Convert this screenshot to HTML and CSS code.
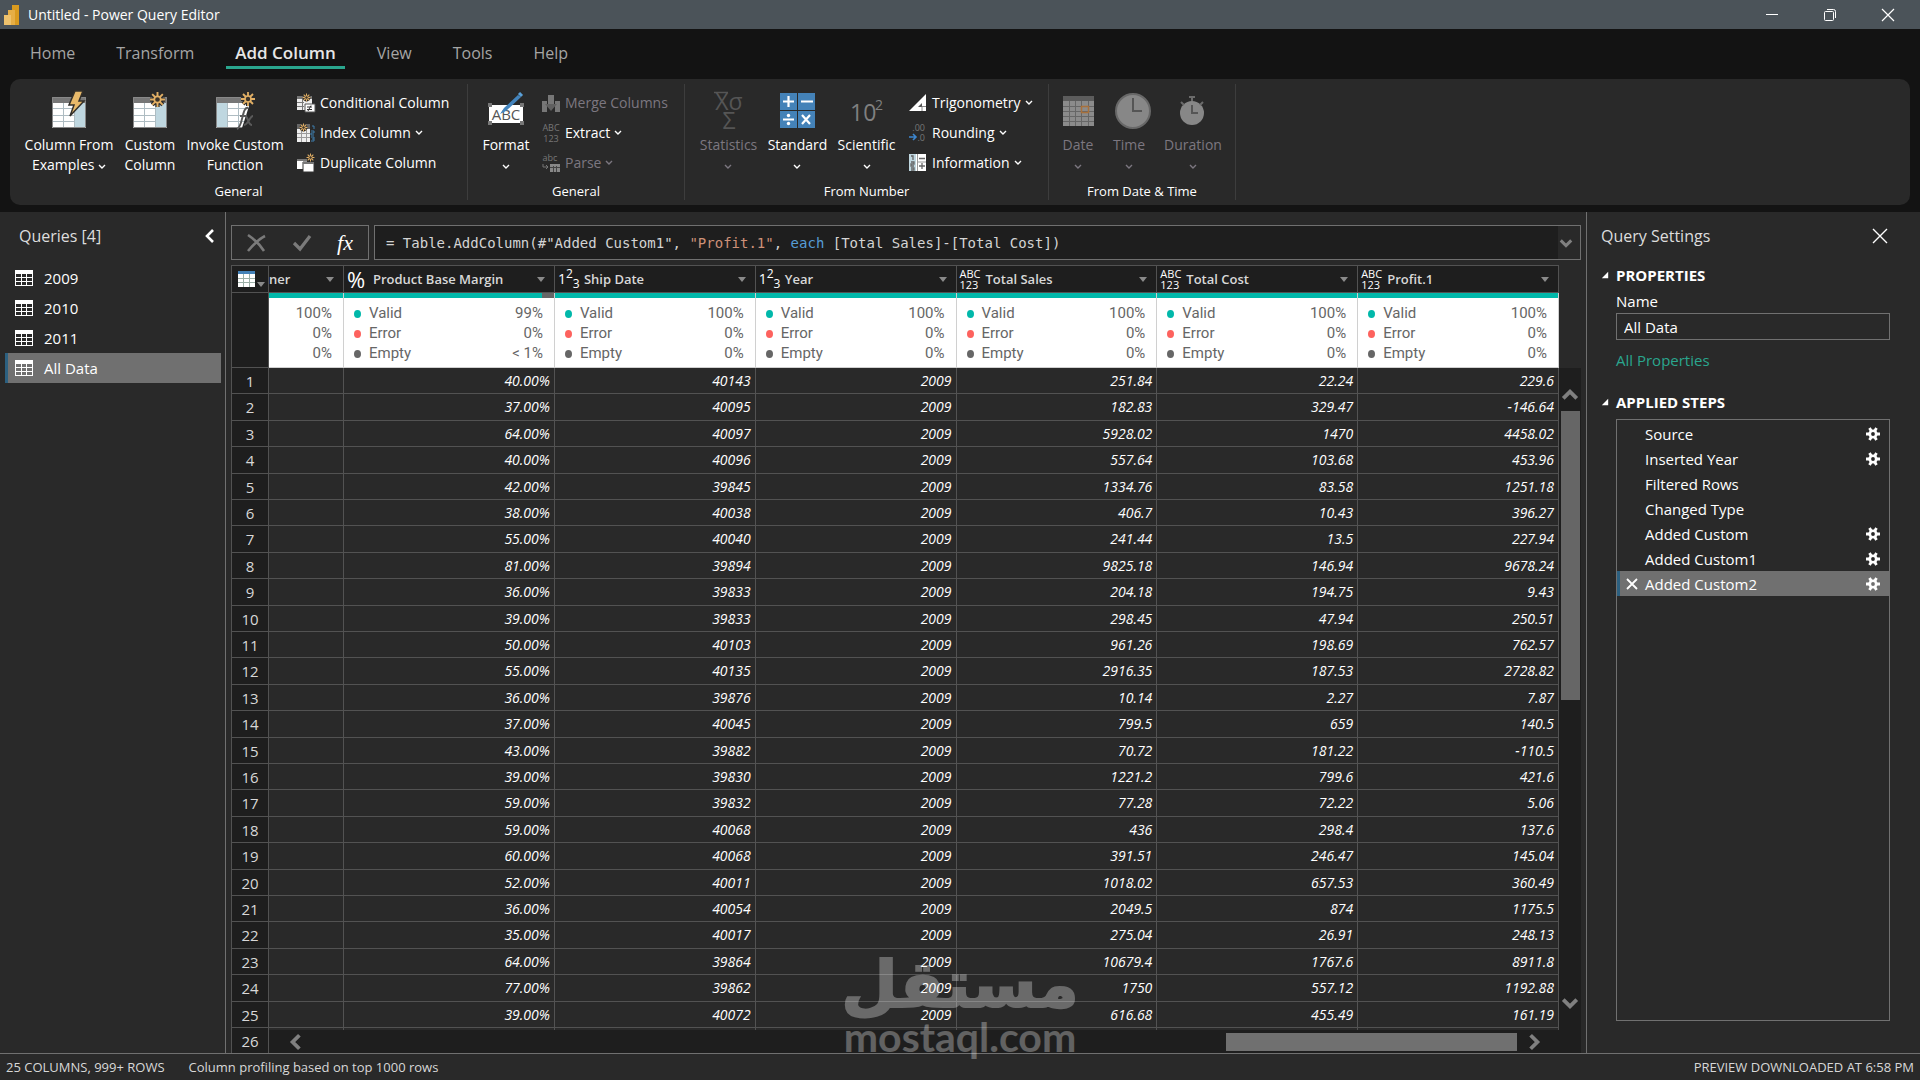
FILE: index.html
```html
<!DOCTYPE html>
<html lang="en">
<head>
<meta charset="utf-8">
<title>Untitled - Power Query Editor</title>
<link rel="stylesheet" href="styles.css">
</head>
<body>
<svg class="sprite" aria-hidden="true">
  <symbol id="chev" viewBox="0 0 8 6"><path d="M1 1l3 3 3-3" fill="none" stroke="currentColor" stroke-width="1.4"/></symbol>
  <symbol id="arrow" viewBox="0 0 16 16"><path d="M2 5l6 6 6-6" fill="none" stroke="currentColor" stroke-width="3.4"/></symbol>
  <symbol id="tri" viewBox="0 0 8 5"><path d="M0 0h8l-4 5z" fill="currentColor"/></symbol>
  <symbol id="sun" viewBox="0 0 16 16"><g stroke="#2b2b2b" stroke-width="4"><path d="M8 1v14M1 8h14M3 3l10 10M13 3L3 13"/></g><g stroke="#e3b065" stroke-width="1.8"><path d="M8 1v14M1 8h14M3 3l10 10M13 3L3 13"/></g><circle cx="8" cy="8" r="3" fill="#3a332a" stroke="#e3b065" stroke-width="1.6"/></symbol>
  <symbol id="grid" viewBox="0 0 18 16"><path d="M0 0h18v16H0z" fill="#fff"/><path d="M1 4h5v3H1zM7 4h4v3H7zM12 4h5v3h-5zM1 8h5v3H1zM7 8h4v3H7zM12 8h5v3h-5zM1 12h5v3H1zM7 12h4v3H7zM12 12h5v3h-5z" fill="var(--hole, #292929)"/></symbol>
  <symbol id="gear" viewBox="0 0 14 14"><g stroke="#fff" stroke-width="2.8"><path d="M0 7h14M3.5 1l7 12M10.500 1l-7 12"/></g><circle cx="7" cy="7" r="4.600" fill="#fff"/><circle cx="7" cy="7" r="1.900" fill="var(--hole, #292929)"/></symbol>
  <symbol id="sheet" viewBox="0 0 34 31"><path d="M0 0h34v31H0z" fill="#fff"/><path d="M0 0h34v6H0z" fill="#777"/><path d="M0 11.500h34M0 18.500h34M0 24.500h34M11.500 6v25M22.500 6v25" stroke="#aebcc2" fill="none"/><path d="M.5.5h33v30H.5z" fill="none" stroke="#888"/></symbol>
  <symbol id="open" viewBox="0 0 10 10"><path d="M9 1v8H1z" fill="#fff"/></symbol>
</svg>

<header class="titlebar">
  <svg class="logo" width="16" height="20" viewBox="0 0 16 20"><path d="M8 0h7v20H8z" fill="#d99a1f"/><path d="M4 5h7v15H4z" fill="#e6ae45"/><path d="M0 10h7v10H0z" fill="#eec26d"/></svg>
  <h1>Untitled - Power Query Editor</h1>
  <div class="winbtns">
    <button type="button" aria-label="Minimize"><svg width="12" height="12"><path d="M0 5.500h12" stroke="#fff"/></svg></button>
    <button type="button" aria-label="Restore"><svg width="12" height="12" viewBox="0 0 12 12" fill="none" stroke="#fff"><rect x=".5" y="2.500" width="9" height="9" rx="1"/><path d="M3 .5h6.500a2 2 0 0 1 2 2V9"/></svg></button>
    <button type="button" aria-label="Close"><svg width="12" height="12"><path d="M0 0l12 12M12 0L0 12" stroke="#fff" stroke-width="1.200"/></svg></button>
  </div>
</header>

<nav class="tabs">
  <a href="#">Home</a><a href="#">Transform</a><a href="#" class="on">Add Column</a><a href="#">View</a><a href="#">Tools</a><a href="#">Help</a>
</nav>

<div class="ribbon">
  <section class="group g1">
    <div class="tools">
      <button type="button" class="big w-example"><svg width="36" height="38" viewBox="0 0 36 38"><use href="#sheet" x="1" y="6" width="34" height="31"/><path d="M24 12h10v24H24z" fill="#bfd7e0"/><path d="M24 0h8l-4 10h5L19 25l4-11h-5z" fill="#e8b96a" stroke="#33302b" stroke-width="1.500"/></svg><span>Column From<br>Examples <svg class="chev"><use href="#chev"/></svg></span></button>
      <button type="button" class="big w-custom"><svg width="36" height="38" viewBox="0 0 36 38"><use href="#sheet" x="1" y="6" width="34" height="31"/><path d="M24 12h10v24H24z" fill="#bfd7e0"/><use href="#sun" x="17" y="0" width="17" height="17"/></svg><span>Custom<br>Column</span></button>
      <button type="button" class="big w-invoke"><svg width="40" height="38" viewBox="0 0 40 38"><use href="#sheet" x="1" y="6" width="34" height="31"/><path d="M2 12h10v24H2z" fill="#bfd7e0"/><path d="M35 12v25h-8z" fill="#292929"/><use href="#sun" x="25" y="0" width="16" height="16"/><path d="M33 17c-6-2-5 19-11 21M25 25h7M30 25c3 0 3 9 7 9M38 25c-3 0-5 9-9 9" fill="none" stroke="#5a5a5a" stroke-width="2"/></svg><span>Invoke Custom<br>Function</span></button>
      <div class="stack">
        <button type="button"><svg width="20" height="20" viewBox="0 0 20 20"><path d="M1 3h15v14H1z" fill="#eee"/><path d="M1 3h15v3H1z" fill="#777"/><path d="M1 9.500h7M1 13.500h7M6.500 5v12" stroke="#777"/><use href="#sun" x="6" y="0" width="9" height="9"/><path d="M9 11h10v8H9z" fill="#fff" stroke="#555"/><path d="M11 14h5M11 16.500h5M15 12.500l-3 5.500" stroke="#333"/></svg>Conditional Column</button>
        <button type="button"><svg width="20" height="20" viewBox="0 0 20 20"><path d="M1 1h13v18H1z" fill="#eee"/><path d="M1 1h13v5H1z" fill="#666"/><path d="M1 10.500h13M1 14.500h13M5.500 6v13M10.500 6v13" stroke="#999"/><use href="#sun" x="3" y="0" width="9" height="9"/><path d="M16 3h2v3M15 8h3v2h-3v2h3M15 14h3v4h-3M16 16h2" fill="none" stroke="#3f7fae"/></svg>Index Column<svg class="chev"><use href="#chev"/></svg></button>
        <button type="button"><svg width="20" height="20" viewBox="0 0 20 20"><path d="M1 6h10v10H1z" fill="#fff"/><path d="M1 6h10v2H1z" fill="#777"/><path d="M7 9h11v10H7z" fill="#fff" stroke="#333"/><path d="M7 9h11v2H7z" fill="#777"/><use href="#sun" x="10" y="0" width="9" height="9"/></svg>Duplicate Column</button>
      </div>
    </div>
    <h2>General</h2>
  </section>
  <section class="group g2">
    <div class="tools">
      <button type="button" class="big w-std"><svg width="38" height="38" viewBox="0 0 38 38"><path d="M2 14h34v18H2z" fill="#fff"/><text x="19" y="29" text-anchor="middle" class="ic-abc">ABC</text><path d="M1 12h4v4H1zM33 12h4v4h-4zM1 30h4v4H1zM33 30h4v4h-4z" fill="#777"/><path d="M31 4L17 17l-4 6 6-3L34 6z" fill="#4384bd"/><path d="M32 2l3 3" stroke="#5aa0d8" stroke-width="3"/></svg><span>Format<br><svg class="chev"><use href="#chev"/></svg></span></button>
      <div class="stack">
        <button type="button" disabled><svg width="20" height="20" viewBox="0 0 20 20"><path d="M1 8h5v11H1zM14 8h5v11h-5z" fill="#777"/><path d="M7 2h6v11H7z" fill="#777"/><path d="M4 11h12l-6 7z" fill="#606060"/></svg>Merge Columns</button>
        <button type="button"><svg width="20" height="20" viewBox="0 0 20 20"><text x="10" y="8" text-anchor="middle" class="ic-s">ABC</text><text x="10" y="19" text-anchor="middle" class="ic-s">123</text></svg>Extract<svg class="chev"><use href="#chev"/></svg></button>
        <button type="button" disabled><svg width="20" height="20" viewBox="0 0 20 20"><text x="9" y="8" text-anchor="middle" class="ic-s">abc</text><path d="M2 11v3h5M5 12l2 2-2 2" fill="none" stroke="#777"/><path d="M9 11h10v8H9z" fill="#888"/><path d="M9 14.500h10M12.500 13v6M15.500 13v6" stroke="#444"/></svg>Parse<svg class="chev"><use href="#chev"/></svg></button>
      </div>
    </div>
    <h2>General</h2>
  </section>
  <section class="group g3">
    <div class="tools">
      <button type="button" class="big w-num" disabled><svg width="36" height="38" viewBox="0 0 36 38"><text x="18" y="19" text-anchor="middle" class="ic-m">Xσ</text><path d="M3 1.500h14" stroke="#555" stroke-width="1.500"/><text x="18" y="38" text-anchor="middle" class="ic-m">Σ</text></svg><span>Statistics<br><svg class="chev"><use href="#chev"/></svg></span></button>
      <button type="button" class="big w-num"><svg width="36" height="38" viewBox="0 0 36 38"><path d="M0 2h17v17H0zM18 2h17v17H18zM0 20h17v17H0zM18 20h17v17H18z" fill="#4482b8"/><path d="M3 10.500h11M8.500 5v11M21 10.500h12M3 28.500h11M22 24l8 9M30 24l-8 9" stroke="#fff" stroke-width="2.200"/><circle cx="8.500" cy="24.500" r="1.700" fill="#fff"/><circle cx="8.500" cy="32.500" r="1.700" fill="#fff"/></svg><span>Standard<br><svg class="chev"><use href="#chev"/></svg></span></button>
      <button type="button" class="big w-num"><svg width="36" height="38" viewBox="0 0 36 38"><text x="1" y="30" class="ic-ten">10</text><text x="26" y="19" class="ic-pow">2</text></svg><span>Scientific<br><svg class="chev"><use href="#chev"/></svg></span></button>
      <div class="stack">
        <button type="button"><svg width="20" height="20" viewBox="0 0 20 20"><path d="M18 1v17H1z" fill="#fff"/><path d="M14 10v4h-4z" fill="#555"/><path d="M18 13.500h-4V18" fill="none" stroke="#888"/></svg>Trigonometry<svg class="chev"><use href="#chev"/></svg></button>
        <button type="button"><svg width="20" height="20" viewBox="0 0 20 20"><text x="17" y="8" text-anchor="end" class="ic-s">.00</text><text x="17" y="18" text-anchor="end" class="ic-s">.0</text><path d="M1 14h7M5 11l3 3-3 3" fill="none" stroke="#3c86cf" stroke-width="1.600"/></svg>Rounding<svg class="chev"><use href="#chev"/></svg></button>
        <button type="button"><svg width="20" height="20" viewBox="0 0 20 20"><path d="M1 1h17v17H1z" fill="#fff"/><path d="M1 1h7v17H1z" fill="#bfd7e0"/><path d="M3 3h2v4M3 9h3v2H3v2h3M3 15h3v2H3M11 5.500h6M11 13h6M14 10v6" fill="none" stroke="#666" stroke-width="1.300"/><path d="M9.500 1v17M9 9h9" stroke="#999"/></svg>Information<svg class="chev"><use href="#chev"/></svg></button>
      </div>
    </div>
    <h2>From Number</h2>
  </section>
  <section class="group g4">
    <div class="tools">
      <button type="button" class="big w-date" disabled><svg width="34" height="38" viewBox="0 0 34 38"><path d="M2 5h31v30H2z" fill="#8b8b8b"/><path d="M2 5h31v5H2z" fill="#5c5c5c"/><path d="M2 15.500h31M2 20.500h31M2 25.500h31M2 30.500h31M8.500 10v25M14.500 10v25M20.500 10v25M27.500 10v25" stroke="#666"/><path d="M20.500 15.500h7v6h-7z" fill="none" stroke="#a8713c" stroke-width="1.500"/></svg><span>Date<br><svg class="chev"><use href="#chev"/></svg></span></button>
      <button type="button" class="big w-time" disabled><svg width="38" height="38" viewBox="0 0 38 38"><circle cx="23" cy="20" r="17" fill="#878787" stroke="#686868" stroke-width="2"/><path d="M23 7v13h9" fill="none" stroke="#555" stroke-width="2"/></svg><span>Time<br><svg class="chev"><use href="#chev"/></svg></span></button>
      <button type="button" class="big w-dur" disabled><svg width="30" height="38" viewBox="0 0 30 38"><circle cx="14" cy="22" r="12" fill="#878787"/><path d="M14 6v4M11 6h6M3 11l3 3M25 11l-3 3" stroke="#6b6b6b" stroke-width="2"/><path d="M14 14v8h6" fill="none" stroke="#555" stroke-width="2"/></svg><span>Duration<br><svg class="chev"><use href="#chev"/></svg></span></button>
    </div>
    <h2>From Date &amp; Time</h2>
  </section>
</div>

<main class="workspace">
  <aside class="queries">
    <div class="panehead"><h2>Queries [4]</h2><button type="button" aria-label="Collapse"><svg width="10" height="14" viewBox="0 0 10 14"><path d="M8 1L2 7l6 6" fill="none" stroke="#fff" stroke-width="2.600"/></svg></button></div>
    <ul>
      <li><svg width="18" height="16"><use href="#grid"/></svg>2009</li>
      <li><svg width="18" height="16"><use href="#grid"/></svg>2010</li>
      <li><svg width="18" height="16"><use href="#grid"/></svg>2011</li>
      <li class="sel"><svg width="18" height="16"><use href="#grid"/></svg>All Data</li>
    </ul>
  </aside>

  <section class="center">
    <div class="formula">
      <div class="fbtns">
        <button type="button" aria-label="Cancel"><svg width="20" height="18" viewBox="0 0 20 18"><path d="M1 1c6 4 12 10 16 16M18 2C12 5 6 11 1 17" fill="none" stroke="#7a7a7a" stroke-width="2.600"/></svg></button>
        <button type="button" aria-label="Accept"><svg width="18" height="18" viewBox="0 0 18 18"><path d="M1 9l6 6L17 2" fill="none" stroke="#7a7a7a" stroke-width="3.200"/></svg></button>
        <button type="button" class="fx">fx</button>
      </div>
      <div class="fbox">
        <code>= Table.AddColumn(#"Added Custom1", <span class="str">"Profit.1"</span>, <span class="kw">each</span> [Total Sales]-[Total Cost])</code>
        <button type="button" aria-label="Expand"><svg width="14" height="14"><use href="#arrow"/></svg></button>
      </div>
    </div>
    <div class="gridwrap">
      <div class="gridbody">
        <table>
          <colgroup><col class="c0"><col class="c1"><col class="c2"><col class="c3"><col class="c3"><col class="c3"><col class="c3"><col class="c3"></colgroup>
          <thead>
            <tr class="names">
              <th><div class="corner"><svg width="17" height="16" viewBox="0 0 17 16"><path d="M0 0h17v16H0z" fill="#fff"/><path d="M0 0h17v3H0z" fill="#4482b8"/><path d="M0 7.500h17M0 11.500h17M5.500 3v13M11.500 3v13" stroke="#9cb0a8"/></svg><svg class="tri"><use href="#tri"/></svg></div></th>
              <th><div class="name first"><b>ner</b><svg class="tri"><use href="#tri"/></svg></div></th>
              <th><div class="name"><i class="pct">%</i><b>Product Base Margin</b><svg class="tri"><use href="#tri"/></svg></div></th>
              <th><div class="name"><i class="num">1<sup>2</sup><sub>3</sub></i><b>Ship Date</b><svg class="tri"><use href="#tri"/></svg></div></th>
              <th><div class="name"><i class="num">1<sup>2</sup><sub>3</sub></i><b>Year</b><svg class="tri"><use href="#tri"/></svg></div></th>
              <th><div class="name"><i class="any">ABC<br>123</i><b>Total Sales</b><svg class="tri"><use href="#tri"/></svg></div></th>
              <th><div class="name"><i class="any">ABC<br>123</i><b>Total Cost</b><svg class="tri"><use href="#tri"/></svg></div></th>
              <th><div class="name"><i class="any">ABC<br>123</i><b>Profit.1</b><svg class="tri"><use href="#tri"/></svg></div></th>
            </tr>
            <tr class="profile">
              <th></th>
              <td><div class="bar"></div><p>100%</p><p>0%</p><p>0%</p></td>
              <td><div class="bar part"></div><p><span class="ok">Valid</span>99%</p><p><span class="err">Error</span>0%</p><p><span class="emp">Empty</span>&lt; 1%</p></td>
              <td><div class="bar"></div><p><span class="ok">Valid</span>100%</p><p><span class="err">Error</span>0%</p><p><span class="emp">Empty</span>0%</p></td>
              <td><div class="bar"></div><p><span class="ok">Valid</span>100%</p><p><span class="err">Error</span>0%</p><p><span class="emp">Empty</span>0%</p></td>
              <td><div class="bar"></div><p><span class="ok">Valid</span>100%</p><p><span class="err">Error</span>0%</p><p><span class="emp">Empty</span>0%</p></td>
              <td><div class="bar"></div><p><span class="ok">Valid</span>100%</p><p><span class="err">Error</span>0%</p><p><span class="emp">Empty</span>0%</p></td>
              <td><div class="bar"></div><p><span class="ok">Valid</span>100%</p><p><span class="err">Error</span>0%</p><p><span class="emp">Empty</span>0%</p></td>
            </tr>
          </thead>
          <tbody>
            <tr><th>1<td><td>40.00%<td>40143<td>2009<td>251.84<td>22.24<td>229.6
            <tr><th>2<td><td>37.00%<td>40095<td>2009<td>182.83<td>329.47<td>-146.64
            <tr><th>3<td><td>64.00%<td>40097<td>2009<td>5928.02<td>1470<td>4458.02
            <tr><th>4<td><td>40.00%<td>40096<td>2009<td>557.64<td>103.68<td>453.96
            <tr><th>5<td><td>42.00%<td>39845<td>2009<td>1334.76<td>83.58<td>1251.18
            <tr><th>6<td><td>38.00%<td>40038<td>2009<td>406.7<td>10.43<td>396.27
            <tr><th>7<td><td>55.00%<td>40040<td>2009<td>241.44<td>13.5<td>227.94
            <tr><th>8<td><td>81.00%<td>39894<td>2009<td>9825.18<td>146.94<td>9678.24
            <tr><th>9<td><td>36.00%<td>39833<td>2009<td>204.18<td>194.75<td>9.43
            <tr><th>10<td><td>39.00%<td>39833<td>2009<td>298.45<td>47.94<td>250.51
            <tr><th>11<td><td>50.00%<td>40103<td>2009<td>961.26<td>198.69<td>762.57
            <tr><th>12<td><td>55.00%<td>40135<td>2009<td>2916.35<td>187.53<td>2728.82
            <tr><th>13<td><td>36.00%<td>39876<td>2009<td>10.14<td>2.27<td>7.87
            <tr><th>14<td><td>37.00%<td>40045<td>2009<td>799.5<td>659<td>140.5
            <tr><th>15<td><td>43.00%<td>39882<td>2009<td>70.72<td>181.22<td>-110.5
            <tr><th>16<td><td>39.00%<td>39830<td>2009<td>1221.2<td>799.6<td>421.6
            <tr><th>17<td><td>59.00%<td>39832<td>2009<td>77.28<td>72.22<td>5.06
            <tr><th>18<td><td>59.00%<td>40068<td>2009<td>436<td>298.4<td>137.6
            <tr><th>19<td><td>60.00%<td>40068<td>2009<td>391.51<td>246.47<td>145.04
            <tr><th>20<td><td>52.00%<td>40011<td>2009<td>1018.02<td>657.53<td>360.49
            <tr><th>21<td><td>36.00%<td>40054<td>2009<td>2049.5<td>874<td>1175.5
            <tr><th>22<td><td>35.00%<td>40017<td>2009<td>275.04<td>26.91<td>248.13
            <tr><th>23<td><td>64.00%<td>39864<td>2009<td>10679.4<td>1767.6<td>8911.8
            <tr><th>24<td><td>77.00%<td>39862<td>2009<td>1750<td>557.12<td>1192.88
            <tr><th>25<td><td>39.00%<td>40072<td>2009<td>616.68<td>455.49<td>161.19
            <tr><th>26<td><td><td><td><td><td><td>
          </tbody>
        </table>
        <div class="vscroll"><svg class="up" width="18" height="18"><use href="#arrow"/></svg><div class="thumb"></div><svg width="18" height="18"><use href="#arrow"/></svg></div>
      </div>
      <div class="hscroll"><svg class="left" width="18" height="18"><use href="#arrow"/></svg><div class="thumb"></div><svg class="right" width="18" height="18"><use href="#arrow"/></svg></div>
    </div>
  </section>

  <aside class="settings">
    <div class="panehead"><h2>Query Settings</h2><button type="button" aria-label="Close pane"><svg width="14" height="14"><path d="M0 0l14 14M14 0L0 14" stroke="#fff" stroke-width="1.400"/></svg></button></div>
    <h3><svg width="8" height="8"><use href="#open"/></svg>PROPERTIES</h3>
    <div class="props">
      <label for="qname">Name</label>
      <input id="qname" type="text" value="All Data">
      <a href="#">All Properties</a>
    </div>
    <h3><svg width="8" height="8"><use href="#open"/></svg>APPLIED STEPS</h3>
    <ol class="steps">
      <li><span>Source</span><svg width="14" height="14"><use href="#gear"/></svg></li>
      <li><span>Inserted Year</span><svg width="14" height="14"><use href="#gear"/></svg></li>
      <li><span>Filtered Rows</span></li>
      <li><span>Changed Type</span></li>
      <li><span>Added Custom</span><svg width="14" height="14"><use href="#gear"/></svg></li>
      <li><span>Added Custom1</span><svg width="14" height="14"><use href="#gear"/></svg></li>
      <li class="sel"><svg class="del" width="12" height="12" viewBox="0 0 12 12"><path d="M1 1l10 10M11 1L1 11" stroke="#fff" stroke-width="1.800"/></svg><span>Added Custom2</span><svg width="14" height="14"><use href="#gear"/></svg></li>
    </ol>
  </aside>
</main>

<footer class="status"><span>25 COLUMNS, 999+ ROWS</span><span>Column profiling based on top 1000 rows</span><span class="end">PREVIEW DOWNLOADED AT 6:58 PM</span></footer>

<div class="watermark"><div lang="ar" dir="rtl">مستقل</div><div>mostaql.com</div></div>
</body>
</html>
```
FILE: styles.css
```css
* { box-sizing: border-box; }
:root { --panel: #292929; --dark: #1e1e1e; --line: #525252; --edge: #707070; --teal: #01b8aa; }
body { margin: 0; height: 100vh; display: flex; flex-direction: column; position: relative; overflow: hidden; background: #131313; color: #fff; font: 15px/20px "Open Sans", "Noto Sans", sans-serif; }
h1, h2, h3, p, ul, ol { margin: 0; padding: 0; font-weight: 400; list-style: none; }
button { margin: 0; padding: 0; border: 0; background: none; color: inherit; font: inherit; }
button:disabled { color: #7c7780; }
svg { flex: none; display: block; overflow: visible; }
.sprite { position: absolute; width: 0; height: 0; }
.chev { display: inline-block; width: 8px; height: 6px; }
.tri { width: 8px; height: 5px; color: #8a8a8a; }

.titlebar { flex: none; height: 29px; display: flex; align-items: center; padding-left: 4px; background: #4b5359; }
.titlebar h1 { margin-left: 8px; font-size: 14px; }
.winbtns { margin-left: auto; padding-right: 3px; display: flex; }
.winbtns button { width: 58px; height: 28px; display: grid; place-items: center; }

.tabs { flex: none; height: 50px; display: flex; gap: 23px; padding-left: 21px; }
.tabs a { height: 40px; padding: 0 9px; font-size: 16px; line-height: 48px; color: #a5a5a5; text-decoration: none; }
.tabs .on { color: #e6e6e6; font-size: 17px; font-weight: 600; border-bottom: 3px solid #2aa68e; }

.ribbon { flex: none; display: flex; margin: 0 10px 7px; height: 126px; padding: 5px 0; border-radius: 10px; background: var(--panel); font-size: 14px; }
.group { display: flex; flex-direction: column; border-right: 1px solid #3d3d3d; }
.group h2 { font-size: 13px; line-height: 18px; text-align: center; }
.tools { display: flex; height: 98px; }
.g1 { width: 458px; padding-left: 12px; }
.g1 h2 { margin-left: -12px; }
.g2 { width: 217px; padding-left: 3px; }
.g2 h2 { margin-left: -3px; }
.g3 { width: 364px; padding-left: 9px; }
.g3 h2 { margin-left: -9px; }
.g4 { width: 187px; padding-left: 6px; }
.g4 h2 { margin-left: -6px; }
.big { display: flex; flex-direction: column; align-items: center; gap: 6px; padding-top: 7px; white-space: nowrap; }
.big span { text-align: center; }
.w-example { width: 94px; }
.w-custom { width: 68px; }
.w-invoke { width: 102px; }
.w-std { width: 70px; }
.w-num { width: 69px; }
.w-date { width: 46px; }
.w-time { width: 56px; }
.w-dur { width: 72px; }
.stack { display: flex; flex-direction: column; padding: 4px 0 0 7px; }
.stack button { height: 30px; display: flex; align-items: center; gap: 4px; white-space: nowrap; }
.g1 .stack { padding-left: 10px; }
.g2 .stack { padding-left: 0; }
.ic-abc { font: 15px "Open Sans", sans-serif; fill: #555; }
.ic-s { font: 9px "Open Sans", sans-serif; fill: #777; }
.ic-m { font: 23px "Open Sans", sans-serif; fill: #555; }
.ic-ten { font: 23px "Open Sans", sans-serif; fill: #808080; }
.ic-pow { font: 14px "Open Sans", sans-serif; fill: #808080; }

.workspace { flex: 1; min-height: 0; display: flex; background: var(--panel); }
.panehead { display: flex; align-items: center; justify-content: space-between; height: 47px; }
.panehead h2 { font-size: 16px; color: #ddd; }
.queries { width: 226px; border-right: 1px solid var(--edge); }
.queries .panehead { padding: 0 10px 0 19px; margin-bottom: 4px; }
.queries li { height: 30px; display: flex; align-items: center; gap: 11px; margin: 0 4px 0 5px; padding-left: 7px; border-left: 3px solid transparent; }
.queries .sel { background: #707070; border-color: #2c6080; --hole: #707070; }

.center { flex: 1; min-width: 0; display: flex; flex-direction: column; padding: 13px 5px 0; }
.formula { display: flex; gap: 5px; height: 35px; margin-bottom: 5px; }
.fbtns { width: 138px; display: flex; align-items: center; justify-content: space-between; padding: 0 15px; border: 1px solid var(--edge); }
.fx { font: italic 22px/30px "Liberation Serif", serif; }
.fbox { flex: 1; display: flex; align-items: center; justify-content: space-between; padding: 0 7px 0 11px; border: 1px solid var(--edge); background: linear-gradient(to left, var(--panel) 22px, var(--dark) 22px); color: #d4d4d4; }
.fbox svg { color: #808080; }
.fbox code { font: 14px "DejaVu Sans Mono", monospace; }
.str { color: #ce9178; }
.kw { color: #569cd6; }

.gridwrap { flex: 1; min-height: 0; position: relative; overflow: hidden; }
.gridbody { display: flex; }
table { flex: 1; table-layout: fixed; border-collapse: separate; border-spacing: 0; border-left: 1px solid var(--line); border-top: 1px solid var(--line); }
th, td { padding: 0; border-right: 1px solid var(--line); border-bottom: 1px solid var(--line); }
th { background: var(--dark); font-weight: 400; color: #d8d8d8; }
.c0 { width: 37px; }
.c1 { width: 75px; }
.c2 { width: 211px; }
.c3 { width: 201px; }
.names { height: 27px; }
.corner { display: flex; align-items: end; gap: 2px; padding-left: 6px; }
.name { display: flex; align-items: center; height: 26px; padding: 0 9px 0 3px; }
.name.first { padding-left: 0; }
.name b { flex: 1; text-align: left; font-size: 13px; font-weight: 600; white-space: nowrap; }
.name i { width: 26px; font-style: normal; text-align: left; color: #fff; }
.name .pct { font-size: 22px; line-height: 26px; }
.num { font-size: 14px; }
.num sup, .num sub { font-size: 12px; line-height: 0; }
.name .any { font-size: 11px; line-height: 11px; }
.profile td { height: 75px; background: #fff; border-color: #d0d0d0; vertical-align: top; font: 15px/20px Roboto, sans-serif; color: #666; }
.bar { height: 5px; margin-bottom: 5px; background: var(--teal); }
.bar.part { background: linear-gradient(to left, #666 12px, var(--teal) 12px); }
.profile p { display: flex; justify-content: space-between; padding: 0 11px 0 10px; }
.profile td:nth-child(2) p { justify-content: flex-end; }
.profile span::before { content: ""; display: inline-block; width: 7px; height: 8px; margin-right: 8px; border-radius: 50%; background: currentColor; }
.ok::before { color: var(--teal); }
.err::before { color: #fd625e; }
tbody tr { height: 26px; }
tbody tr:nth-child(5n+2), tbody tr:nth-child(5n+4) { height: 27px; }
tbody th { font-size: 15px; text-align: center; line-height: 20px; }
tbody td { padding-right: 4px; font-size: 14px; font-style: italic; font-weight: 500; line-height: 20px; text-align: right; }
.vscroll, .hscroll { display: flex; align-items: center; color: #808080; background: var(--dark); }
.vscroll { width: 22px; margin-top: 103px; flex-direction: column; padding: 18px 0 0; height: 664px; }
.vscroll .thumb { width: 19px; height: 289px; margin: 7px 0 294px; background: #666; }
.vscroll .up { transform: rotate(180deg); }
.hscroll { position: absolute; left: 38px; right: 0; bottom: 0; height: 23px; padding: 0 38px 0 18px; gap: 8px; }
.hscroll .thumb { width: 291px; height: 18px; margin-left: auto; background: #707070; }
.left { transform: rotate(90deg); }
.right { transform: rotate(-90deg); }

.settings { width: 334px; border-left: 1px solid var(--edge); display: flex; flex-direction: column; padding: 0 30px 32px 14px; }
.settings .panehead { padding-right: 3px; }
.settings h3 { display: flex; align-items: center; gap: 7px; height: 32px; font-size: 15px; font-weight: 700; }
.props { display: flex; flex-direction: column; padding-left: 15px; margin-bottom: 16px; }
.props label { height: 22px; }
.props input { height: 27px; padding: 0 7px; border: 1px solid var(--edge); background: none; color: #fff; font: inherit; }
.props a { margin-top: 10px; color: #2aa68e; text-decoration: none; }
.steps { flex: 1; margin: 1px 0 0 15px; padding-top: 1px; border: 1px solid var(--edge); }
.steps li { height: 25px; display: flex; align-items: center; padding: 0 9px 0 25px; border-left: 3px solid transparent; }
.steps span { flex: 1; }
.steps .sel { padding-left: 6px; background: #707070; border-color: #2c6080; --hole: #707070; }
.del { margin-right: 7px; }

.status { flex: none; height: 27px; display: flex; align-items: center; gap: 24px; padding: 0 6px; border-top: 1px solid var(--edge); background: var(--panel); color: #d8d8d8; font-size: 13px; }
.end { margin-left: auto; }

.watermark { position: absolute; left: 0; right: 0; bottom: 24px; text-align: center; pointer-events: none; color: #fff; opacity: 0.3; font: 700 41px/38px Lato, sans-serif; }
.watermark [lang="ar"] { font: 700 65px/66px "DejaVu Sans", sans-serif; -webkit-text-stroke: 2px #fff; }
```
